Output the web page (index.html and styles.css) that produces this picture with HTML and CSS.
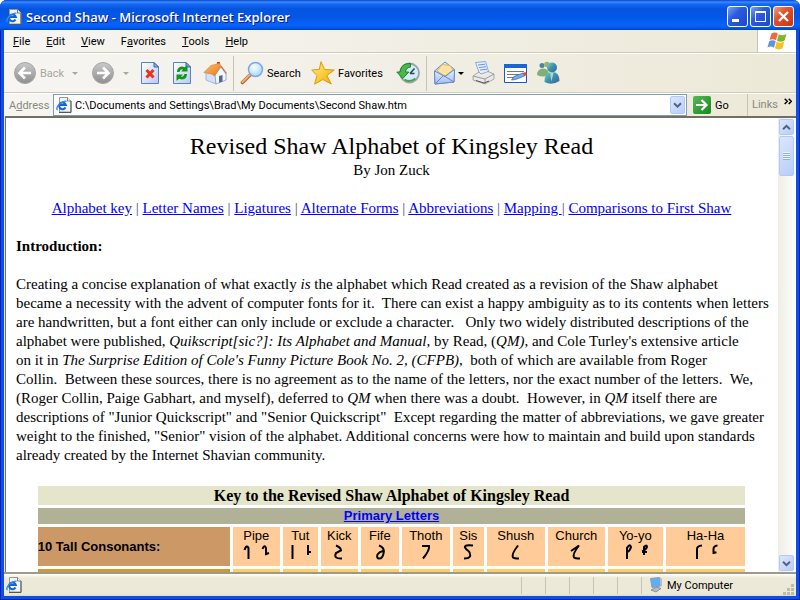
FILE: index.html
```html
<!DOCTYPE html>
<html lang="en">
<head>
<meta charset="utf-8">
<title>Second Shaw - Microsoft Internet Explorer</title>
<link rel="stylesheet" href="styles.css">
</head>
<body>
<svg class="defs" aria-hidden="true">
  <defs>
    <linearGradient id="pg" x1="0" y1="0" x2="1" y2="1"><stop offset="0" stop-color="#fff"/><stop offset="1" stop-color="#b4c8f8"/></linearGradient>
    <linearGradient id="gray" x1="0" y1="0" x2="0" y2="1"><stop offset="0" stop-color="#c9c9c9"/><stop offset="1" stop-color="#8f8f8f"/></linearGradient>
    <linearGradient id="gold" x1="0" y1="0" x2="1" y2="1"><stop offset="0" stop-color="#fff27a"/><stop offset="1" stop-color="#f5a800"/></linearGradient>
    <linearGradient id="env" x1="0" y1="0" x2="0" y2="1"><stop offset="0" stop-color="#e8f1ff"/><stop offset="1" stop-color="#9dbff0"/></linearGradient>
    <linearGradient id="roof" x1="0" y1="0" x2="1" y2="1"><stop offset="0" stop-color="#ffc070"/><stop offset="1" stop-color="#e87818"/></linearGradient>
    <linearGradient id="body" x1="0" y1="0" x2="1" y2="1"><stop offset="0" stop-color="#7fd0c0"/><stop offset=".5" stop-color="#3c90a8"/><stop offset="1" stop-color="#3c60a8"/></linearGradient>
    <radialGradient id="lens" cx=".4" cy=".35" r=".7"><stop offset="0" stop-color="#fff"/><stop offset="1" stop-color="#9dd3f5"/></radialGradient>
    <symbol id="iepage" viewBox="0 0 16 16">
      <path d="M3.500.5h8l3.500 3.500v11h-11.500z" fill="#f4f4ee" stroke="#999"/>
      <path d="M15 4v11.500h-12" fill="none" stroke="#555"/>
      <path d="M11.500.5v3.500h3.500" fill="#fff" stroke="#777"/>
      <path d="M9.500 10.500A3.400 3.400 0 1 1 9.800 8H4" fill="none" stroke="#1763d6" stroke-width="2.100"/>
      <path d="M1.500 13C-1.500 11 6 3 10.500 4.300" fill="none" stroke="#2f8be8" stroke-width="1.400"/>
    </symbol>
  </defs>
</svg>
<div class="window">
  <header class="titlebar">
    <svg class="i16" viewBox="0 0 16 16"><use href="#iepage"/></svg>
    <span class="caption">Second Shaw - Microsoft Internet Explorer</span>
    <button class="wbtn" aria-label="Minimize"><svg viewBox="0 0 19 19"><path d="M4 12h7v3H4z" fill="#fff"/></svg></button>
    <button class="wbtn" aria-label="Maximize"><svg viewBox="0 0 19 19"><path d="M4 4h11v11H4zM5 6v8h9V6z" fill="#fff" fill-rule="evenodd"/></svg></button>
    <button class="wbtn close" aria-label="Close"><svg viewBox="0 0 19 19"><path d="M5 5l9 9M14 5l-9 9" stroke="#fff" stroke-width="2.400"/></svg></button>
  </header>
  <div class="client">
    <nav class="menubar">
      <button><u>F</u>ile</button><button><u>E</u>dit</button><button><u>V</u>iew</button><button>F<u>a</u>vorites</button><button><u>T</u>ools</button><button><u>H</u>elp</button>
      <div class="flag"><svg viewBox="0 0 20 18">
        <path d="M4.500 1.500Q8-.5 10.800 1.800L9 8.300Q6 6.200 2.600 8z" fill="#f0693a"/>
        <path d="M11.800 2.300Q15 4.500 19.500 2L17.600 8.600Q14 11 10 8.800z" fill="#7cb828"/>
        <path d="M2.300 9Q6 7.300 8.700 9.300L7 15.800Q4 13.500.4 15.500z" fill="#5b94e0"/>
        <path d="M9.700 9.800Q13 12 17.300 9.600L15.500 16.200Q11.500 18.500 7.900 16.300z" fill="#f8c020"/>
      </svg></div>
    </nav>
    <div class="toolbar">
      <button class="tool off back"><svg class="i24" viewBox="0 0 24 24"><circle cx="12" cy="12" r="10.500" fill="url(#gray)" stroke="#a5a5a5"/><path d="M18 12H7M12 6.500L6.500 12l5.500 5.500" fill="none" stroke="#fff" stroke-width="2.600"/></svg><span>Back</span><i class="drop"></i></button>
      <button class="tool off fwd" aria-label="Forward"><svg class="i24" viewBox="0 0 24 24"><circle cx="12" cy="12" r="10.500" fill="url(#gray)" stroke="#a5a5a5"/><path d="M6 12h11M12 6.500l5.500 5.500-5.500 5.500" fill="none" stroke="#fff" stroke-width="2.600"/></svg><i class="drop"></i></button>
      <button class="tool" aria-label="Stop"><svg class="i24" viewBox="0 0 24 24"><path d="M2.500 1.500h12.500l4.500 4.500v16.500h-17z" fill="url(#pg)" stroke="#5f7fc0"/><path d="M15 1.500v4.500h4.500z" fill="#8fb0f0" stroke="#3f63b0"/><path d="M7.500 9l7 7.500M14.500 9l-7 7.500" stroke="#f03010" stroke-width="3"/></svg></button>
      <button class="tool" aria-label="Refresh"><svg class="i24" viewBox="0 0 24 24"><path d="M2.500 1.500h12.500l4.500 4.500v16.500h-17z" fill="url(#pg)" stroke="#5f7fc0"/><path d="M15 1.500v4.500h4.500z" fill="#8fb0f0" stroke="#3f63b0"/><path d="M6 11q0-5 5-5.500l3 .8L16.500 4v6.500H10l2-2q-2.500-1-3.500 2.500zM16 13q0 5-5 5.500l-3-.8L5.500 20v-6.500H12l-2 2q2.500 1 3.500-2.500z" fill="#109a10"/></svg></button>
      <button class="tool" aria-label="Home"><svg class="i24" viewBox="0 0 24 24"><path d="M14 1h3v6h-3z" fill="#c44020"/><path d="M3 12l5-2 5 5v8l-10-4z" fill="#d4e0fa" stroke="#90a8d8" stroke-width=".8"/><path d="M12 14l6-8 5 7v6l-10 4z" fill="#f4f7ff" stroke="#8098cc" stroke-width=".8"/><path d="M.8 11.500L8 4.500l8.500-2.200L18 5l-6.500 10-3-2z" fill="url(#roof)" stroke="#d08030" stroke-width=".6"/><path d="M18 5l5.500 7.500" stroke="#c07040" stroke-width="1.200"/><path d="M16 15l3.500-1v6.500l-3.500 1.300z" fill="#506898"/></svg></button>
      <i class="sep"></i>
      <button class="tool search"><svg class="i24" viewBox="0 0 24 24"><path d="M10 14l-7.500 7.500" stroke="#b86830" stroke-width="3.600" stroke-linecap="round"/><path d="M9.500 14l-7 7" stroke="#f0b070" stroke-width="1.800" stroke-linecap="round"/><circle cx="15.500" cy="8.500" r="7" fill="url(#lens)" stroke="#7fa6e4" stroke-width="1.500"/></svg><span>Search</span></button>
      <button class="tool fav"><svg class="i24" viewBox="0 0 24 24"><path d="M10 .7l3.600 7.800 9.700.5-7.500 5.500 4.500 8.500-8.500-4.500-8.300 4.700 2.500-8.700L.7 9l7.600-.5z" fill="url(#gold)" stroke="#d99a10" stroke-linejoin="round"/></svg><span>Favorites</span></button>
      <button class="tool" aria-label="History"><svg class="i24" viewBox="0 0 24 24"><circle cx="13.500" cy="12" r="9.500" fill="#d4ecf8" stroke="#98a4a8" stroke-width="1.800"/><path d="M14 12.500l4.500-5M14 12.500h4.500" stroke="#345" stroke-width="1.500"/><path d="M14.500 2.500Q5 2 4 11H.8l6 6.500 6-6.500H9.500q0-4 5-5z" fill="#48b848" stroke="#187828" stroke-width=".9"/><path d="M8.500 18.500q5 3.500 11-1" stroke="#48a050" stroke-width="1.800" fill="none"/></svg></button>
      <i class="sep"></i>
      <button class="tool mail" aria-label="Mail"><svg class="i24" viewBox="0 0 24 24"><path d="M1.500 10L12 1l9.500 7.500-.5 12.500-19 2z" fill="url(#env)" stroke="#6888c8"/><path d="M4 10l5.500-6.500 7.500 1 3 4.500-8 6z" fill="#ffe2a0" stroke="#d8a850" stroke-width=".8"/><path d="M1.500 10l10.500 5.500L21.500 8.500 21 21l-19 2z" fill="url(#env)" stroke="#6888c8"/><path d="M2 23l8.500-8.500L21 21" fill="none" stroke="#6888c8"/></svg><i class="drop dark"></i></button>
      <button class="tool" aria-label="Print"><svg class="i24" viewBox="0 0 24 24"><path d="M3.500 1.500l10-1L17 12l-9 2z" fill="#e4efff" stroke="#88a8e0"/><path d="M6 4l7-.8M7 6.500l7-.8M8 9l7-.8" stroke="#6f94dc"/><path d="M1 15l6-4 2 2 7-2.500 6 2.500v5l-9 5-12-4z" fill="#e9e9e9" stroke="#949494" stroke-width=".8"/><path d="M1 15l12 3 9-5M13 18v5" fill="none" stroke="#9a9a9a"/><path d="M4 19.500l8 2.500 5-2" stroke="#555" fill="none"/></svg></button>
      <button class="tool edit" aria-label="Edit"><svg class="i24" viewBox="0 0 24 24"><path d="M.5 3.500h22v18H.5z" fill="#fff" stroke="#1858c8"/><path d="M0 3h23v4H0z" fill="#1864d8"/><path d="M3 10.500h17M3 13.500h12M3 16.500h7" stroke="#777"/><path d="M7.500 19l2.500-3.500 9-3.500 1.500 3-9 3.500z" fill="#6eb0f8" stroke="#4060a0" stroke-width=".7"/><path d="M18.500 12l3-1 1.500 3-2.500 1z" fill="#e05030"/></svg></button>
      <button class="tool" aria-label="Messenger"><svg class="i24" viewBox="0 0 24 24"><circle cx="6" cy="4.500" r="2.500" fill="#48889c"/><circle cx="11" cy="3.500" r="2.800" fill="#98b468"/><path d="M1 14q0-6 6-6.500 6 0 6 6.500-6 3-12 0z" fill="#80b078"/><circle cx="16" cy="6.500" r="5" fill="url(#body)"/><path d="M8.500 21q0-10 7.500-10t7.500 9q-8 5-15 1z" fill="url(#body)"/><path d="M14 11.500l1.500 9 2-9" fill="#a8dcd8"/></svg></button>
    </div>
    <form class="addressbar">
      <label for="addr">A<u>d</u>dress</label>
      <div class="combo">
        <svg class="i16" viewBox="0 0 16 16"><use href="#iepage"/></svg>
        <input id="addr" type="text" value="C:\Documents and Settings\Brad\My Documents\Second Shaw.htm">
        <button type="button" class="xp" aria-label="Show addresses"><svg viewBox="0 0 15 17"><path d="M3.500 6.500l4 4 4-4" fill="none" stroke="#4d6185" stroke-width="2.200"/></svg></button>
      </div>
      <button type="button" class="go"><svg viewBox="0 0 18 18"><path d="M3 9h10M8.500 4l5 5-5 5" fill="none" stroke="#fff" stroke-width="2.200"/></svg><span>Go</span></button>
      <div class="links"><span>Links</span><svg viewBox="0 0 8 7"><path d="M.7.7l2.600 2.600L.7 6M4.700.7l2.600 2.600L4.700 6" fill="none" stroke="#000" stroke-width="1.500"/></svg></div>
    </form>
    <div class="view">
      <main class="page">
        <h1>Revised Shaw Alphabet of Kingsley Read</h1>
        <p class="c">By Jon Zuck</p>
        <p class="c gap"><a href="#key">Alphabet key</a> <s>|</s> <a href="#names">Letter Names</a> <s>|</s> <a href="#lig">Ligatures</a> <s>|</s> <a href="#alt">Alternate Forms</a> <s>|</s> <a href="#abbr">Abbreviations</a> <s>|</s> <a href="#map">Mapping </a><s>|</s> <a href="#first">Comparisons to First Shaw</a></p>
        <p class="gap"><strong>Introduction:</strong></p>
        <p class="gap intro">Creating a concise explanation of what exactly <em>is</em> the alphabet which Read created as a revision of the Shaw alphabet<br>became a necessity with the advent of computer fonts for it.&nbsp; There can exist a happy ambiguity as to its contents when letters<br>are handwritten, but a font either can only include or exclude a character.&nbsp;&nbsp; Only two widely distributed descriptions of the<br>alphabet were published, <em>Quikscript[sic?]: Its Alphabet and Manual,</em> by Read, (<em>QM)</em>, and Cole Turley's extensive article<br>on it in <em>The Surprise Edition of Cole's Funny Picture Book No. 2, (CFPB)</em>,&nbsp; both of which are available from Roger<br>Collin.&nbsp; Between these sources, there is no agreement as to the name of the letters, nor the exact number of the letters.&nbsp; We,<br>(Roger Collin, Paige Gabhart, and myself), deferred to <em>QM</em> when there was a doubt.&nbsp; However, in <em>QM</em> itself there are<br>descriptions of "Junior Quickscript" and "Senior Quickscript"&nbsp; Except regarding the matter of abbreviations, we gave greater<br>weight to the finished, "Senior" vision of the alphabet. Additional concerns were how to maintain and build upon standards<br>already created by the Internet Shavian community.</p>
        <table id="key">
          <colgroup><col class="w192"><col class="w47"><col class="w35"><col class="w37"><col class="w38"><col class="w48"><col class="w31"><col class="w58"><col class="w57"><col class="w55"><col></colgroup>
          <tr class="t1"><th colspan="11">Key to the Revised Shaw Alphabet of Kingsley Read</th></tr>
          <tr class="t2"><th colspan="11"><a href="#primary">Primary Letters</a></th></tr>
          <tr class="t3">
            <th>10 Tall Consonants:</th>
            <td>Pipe<svg viewBox="0 0 30 18"><path d="M3.500 6q2-6 4-2v11M21.500 5q2-5 3.500-1v6l3-1"/></svg></td>
            <td>Tut<svg viewBox="0 0 30 18"><path d="M7.500 1v14M23 1v10M23 8h3"/></svg></td>
            <td>Kick<svg viewBox="0 0 30 18"><path d="M12 1.500q5 2 5 5l-5 2.500q-3 6 6 5.500"/></svg></td>
            <td>Fife<svg viewBox="0 0 30 18"><path d="M14 1.500q6 2 4.500 8-1 5-4 5-3.500 0-2-4 2-3 5.500-3.500"/></svg></td>
            <td>Thoth<svg viewBox="0 0 30 18"><path d="M11 2h7q1 4-6 12.500"/></svg></td>
            <td>Sis<svg viewBox="0 0 30 18"><path d="M20 1.500q-9-1-8 2 1 2 4 4 4 7-5 7"/></svg></td>
            <td>Shush<svg viewBox="0 0 30 18"><path d="M17 1.500q-7 9-5 12 1 1 6 1"/></svg></td>
            <td>Church<svg viewBox="0 0 30 18"><path d="M10 7l8-5.500q-7 9-5 12 1 1 6 1"/></svg></td>
            <td>Yo-yo<svg viewBox="0 0 30 18"><path d="M7 15V4q3-5 4-1-1 4-4 5M24 11V3q3-3 3 0-1 3-5 4M22 8h5"/></svg></td>
            <td>Ha-Ha<svg viewBox="0 0 30 18"><path d="M6 15V5q0-3 5-3.500M22.500 10V5q0-3 4-3.500M22.500 8.500h3"/></svg></td>
          </tr>
          <tr class="t4"><th></th><td></td><td></td><td></td><td></td><td></td><td></td><td></td><td></td><td></td><td></td></tr>
        </table>
      </main>
      <div class="scroll">
        <button class="xp" aria-label="Scroll up"><svg viewBox="0 0 15 15"><path d="M3.500 9.500l4-4 4 4" fill="none" stroke="#4d6185" stroke-width="2.200"/></svg></button>
        <button class="xp thumb" aria-label="Scroll position"><i></i></button>
        <button class="xp down" aria-label="Scroll down"><svg viewBox="0 0 15 15"><path d="M3.500 5.500l4 4 4-4" fill="none" stroke="#4d6185" stroke-width="2.200"/></svg></button>
      </div>
    </div>
    <footer class="status">
      <svg class="i16" viewBox="0 0 16 16"><use href="#iepage"/></svg>
      <span class="msg"></span><i></i><i></i><i></i><i></i><i></i>
      <div class="zone"><svg class="i16" viewBox="0 0 16 16"><path d="M2.500 1.500l9-1 1 8.500-8.500 1.500z" fill="#58b0f8" stroke="#99a"/><path d="M12 .5l2 1V9l-1.500.5z" fill="#bbc"/><path d="M3 13l6-3 4 1.500-5 3.500z" fill="#b8bcc8" stroke="#667" stroke-width=".6"/></svg>My Computer</div>
      <svg class="grip" viewBox="0 0 12 12"><path d="M8 0h3v3H8zM4 4h3v3H4zM8 4h3v3H8zM0 8h3v3H0zM4 8h3v3H4zM8 8h3v3H8z" fill="#c0bba4"/></svg>
    </footer>
  </div>
</div>
</body>
</html>
```
FILE: styles.css
```css
* { box-sizing: border-box; }
html, body { height: 100%; }
body { margin: 0; background: #fff; color: #000; font-family: Roboto, sans-serif; font-size: 11px; overflow: hidden; }
button { font: inherit; color: inherit; padding: 0; border: 0; background: none; display: flex; align-items: center; }
svg { display: block; flex: none; }
.defs { position: absolute; width: 0; height: 0; }
.i16 { width: 16px; height: 16px; }
.i24 { width: 24px; height: 24px; }

.window { height: 100vh; display: flex; flex-direction: column; border-radius: 7px 7px 0 0; background: #0a4fe8; overflow: hidden; box-shadow: inset 1px 0 #0a1fb0, inset -1px -1px #0a1fb0; }
.titlebar { flex: none; height: 30px; display: flex; align-items: center; gap: 2px; padding: 3px 6px 0 6px; background: linear-gradient(#0842c8 0, #3a8cff 2px, #1668f4 4px, #0355e0 9px, #0458e8 18px, #0664fa 25px, #0458e8 28px, #0340c0 30px); }
.caption { flex: 1; margin-left: 2px; color: #fff; font: 600 13px/20px "Open Sans", sans-serif; text-shadow: 1px 1px #0a1883; white-space: nowrap; }
.wbtn { width: 21px; height: 21px; border: 1px solid #fff; border-radius: 3px; background: linear-gradient(135deg, #7ba0f4, #2a5be0 40%, #1c48d0); }
.wbtn svg { width: 19px; height: 19px; }
.close { background: linear-gradient(135deg, #f0a088, #e0502c 40%, #c83410); }

.client { flex: 1; min-height: 0; display: flex; flex-direction: column; margin: 0 4px 4px; background: #ece9d8; }
.menubar { flex: none; height: 23px; display: flex; border-bottom: 1px solid #d0ccb8; background: linear-gradient(90deg, #f6f5f2, #ece9d8); padding-left: 9px; gap: 16px; }
.flag { margin-left: auto; width: 39px; background: #fff; border-left: 1px solid #c8c4b0; display: flex; align-items: center; justify-content: center; }
.flag svg { width: 20px; height: 18px; }
.toolbar { flex: none; height: 40px; display: flex; align-items: center; padding: 0 9px; gap: 8px; border-top: 1px solid #fff; border-bottom: 1px solid #d0ccb8; background: linear-gradient(90deg, #f6f5f2, #ece9d8); }
.tool { gap: 3px; }
.off { color: #a9a698; }
.back { width: 70px; }
.back .drop { margin: 0 5px 0 auto; }
.fwd { width: 40px; }
.fwd .drop { margin-left: 5px; }
.search { width: 63px; }
.fav { width: 77px; }
.drop { border: 3px solid transparent; border-top-color: #aaa798; border-bottom: 0; }
.drop.dark { border-top-color: #000; }
.mail { gap: 1px; }
.sep { width: 1px; height: 35px; background: #c8c4b0; margin: 0 -2px; }

.addressbar { flex: none; height: 23px; display: flex; align-items: center; border-top: 1px solid #fff; background: linear-gradient(90deg, #f6f5f2, #ece9d8); }
.addressbar label { color: #8a887c; margin: 0 0 0 5px; width: 44px; }
.combo { flex: 1; height: 22px; display: flex; align-items: center; background: #fff; border: 1px solid #7f9db9; padding: 0 1px 0 2px; gap: 3px; }
.combo input { flex: 1; min-width: 0; border: 0; padding: 0; font: inherit; background: none; outline: 0; }
.xp { justify-content: center; border: 1px solid #b4c8f6; border-radius: 2px; background: linear-gradient(135deg, #dbe6fe, #b9cdf9); }
.combo .xp { width: 15px; height: 18px; }
.combo .xp svg { width: 13px; height: 16px; }
.go { gap: 4px; margin-left: 6px; width: 54px; }
.go svg { width: 18px; height: 18px; background: linear-gradient(135deg, #58b858, #128a18); border-radius: 2px; }
.links { display: flex; width: 49px; height: 22px; border-left: 1px solid #c8c4b0; padding: 4px 4px 0; justify-content: space-between; color: #8a887c; }
.links svg { width: 8px; height: 7px; }

.view { flex: 1; min-height: 0; display: flex; margin-left: 1px; border: 1px solid #716f64; border-width: 2px 0 0 1px; background: #fff; }
.page { flex: 1; min-width: 0; overflow: hidden; padding: 14px 11px 0 10px; font: 15px/19px "Liberation Serif", serif; }
.page h1 { margin: 0; font-size: 24px; line-height: 29px; font-weight: normal; text-align: center; }
.page p { margin: 0; }
.page .c { text-align: center; }
.page .gap { margin-top: 19px; }
.page .intro { white-space: nowrap; }
.page a { color: #00f; }
.page s { text-decoration: none; color: #4a4a8a; }
.page table { width: 95%; margin: 18px auto 0; table-layout: fixed; border-spacing: 3px; }
.page th, .page td { padding: 0; }
.w192 { width: 192px; } .w47 { width: 47px; } .w35 { width: 35px; } .w37 { width: 37px; } .w38 { width: 38px; }
.w48 { width: 48px; } .w31 { width: 31px; } .w58 { width: 58px; } .w57 { width: 57px; } .w55 { width: 55px; }
.t1 th { background: #e5e5cb; font-size: 16px; }
.t2 th { background: #b1b197; font: bold 13px/16px "Liberation Sans", sans-serif; }
.t3 { font: bold 13px/17px "Liberation Sans", sans-serif; }
.t3 th { background: #cc9966; text-align: left; height: 39px; }
.t3 td { background: #ffcc99; text-align: center; vertical-align: top; font-weight: normal; }
.t3 svg { width: 30px; height: 18px; margin: 0 auto; fill: none; stroke: #000; stroke-width: 2; }
.t4 th { background: #cc9933; height: 39px; }
.t4 td { background: #ffcc66; }

.scroll { flex: none; width: 18px; display: flex; flex-direction: column; gap: 1px; padding: 1px; background: linear-gradient(90deg, #eeede5, #fefefb); }
.scroll .xp { width: 15px; height: 16px; flex: none; }
.scroll .xp svg { width: 13px; height: 13px; }
.scroll .thumb { height: 40px; }
.thumb i { width: 7px; height: 8px; background: repeating-linear-gradient(#eef4fe 0 1px, #8cb0f8 1px 2px); }
.down.down { margin-top: auto; }

.status { flex: none; height: 24px; display: flex; align-items: center; padding: 0 1px 0 2px; border-top: 2px solid #9d9a8a; background: linear-gradient(#fff, #ece9d8 4px, #ece9d8 20px, #dcd8c4); }
.msg { flex: 1; }
.status > i { width: 24px; height: 17px; border-left: 1px solid #c8c4b0; }
.zone { display: flex; align-items: center; gap: 3px; width: 142px; height: 17px; border-left: 1px solid #c8c4b0; padding-left: 6px; }
.grip { width: 12px; height: 12px; align-self: flex-end; }
```
